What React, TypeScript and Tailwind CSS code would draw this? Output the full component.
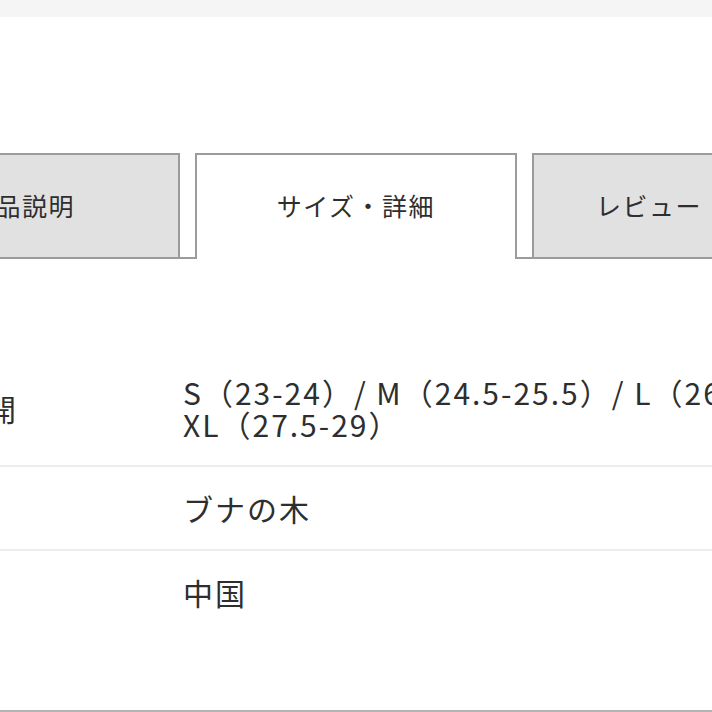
const FONT = { fontFamily: '"Noto Sans CJK JP", "Noto Sans", sans-serif' };

const rows = [
  {
    label: "サイズ展開",
    value: ["S（23-24）/ M（24.5-25.5）/ L（26-27）/", "XL（27.5-29）"],
  },
  { label: "素材", value: ["ブナの木"] },
  { label: "原産国", value: ["中国"] },
];

export default function App() {
  return (
    <div
      className="w-[712px] h-[712px] overflow-hidden bg-white text-[#2e2e2e] border-b-2 border-[#b3b3b3]"
      style={FONT}
    >
      <div className="h-[17px] bg-[#f5f5f5]" />

      <div className="-ml-[136px] w-[1000px]">
        {/* tabs */}
        <div className="mt-[136px] flex gap-[15px] items-start border-b-2 border-[#9b9b9b]">
          <div className="w-[316px] h-[104px] border-2 border-b-0 border-[#9b9b9b] bg-[#e1e1e1] flex items-center justify-center text-[25px] tracking-[1.5px]">
            商品説明
          </div>
          <div className="w-[322px] h-[106px] -mb-[2px] border-2 border-b-0 border-[#9b9b9b] bg-white flex items-center justify-center pb-[2px] text-[25px] tracking-[1.5px]">
            サイズ・詳細
          </div>
          <div className="w-[234px] h-[104px] border-2 border-b-0 border-[#9b9b9b] bg-[#e1e1e1] flex items-center justify-center text-[25px] tracking-[1.5px]">
            レビュー
          </div>
        </div>

        {/* details */}
        <div className="mt-[92px]">
          {rows.map((r, i) => (
            <div
              key={r.label}
              className={
                i < rows.length - 1
                  ? "flex items-center py-[25px] border-b-2 border-[#ededed]"
                  : "flex items-center py-[25px]"
              }
            >
              <div className="w-[319px] pl-[3px] text-[30px] leading-[32px] shrink-0">
                {r.label}
              </div>
              <div className="text-[30px] leading-[32px] tracking-[2px] whitespace-nowrap">
                {r.value.map((line) => (
                  <div key={line}>{line}</div>
                ))}
              </div>
            </div>
          ))}
        </div>
      </div>
    </div>
  );
}
